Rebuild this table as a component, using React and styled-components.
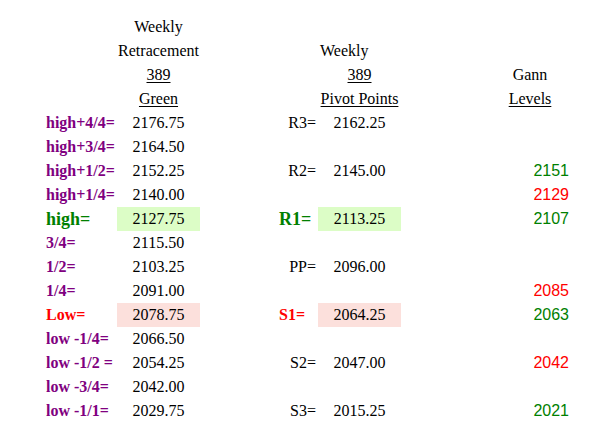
import React from "react";
import styled, { createGlobalStyle } from "styled-components";

const Global = createGlobalStyle`
  html, body { margin: 0; padding: 0; background: #ffffff; }
  body { font-family: "Liberation Serif", "Times New Roman", serif; font-size: 16px; color: #000; }
`;

const COLS = "71px 83px 79px 39px 83px 89px 80px";

const Table = styled.div`
  display: flex;
  flex-direction: column;
  padding: 15px 0 0 46px;
`;

const Row = styled.div`
  display: grid;
  grid-template-columns: ${COLS};
  height: 24px;
  align-items: stretch;
`;

const Cell = styled.div`
  display: flex;
  align-items: center;
  justify-content: ${(p) => p.$justify || "flex-start"};
  white-space: nowrap;
  line-height: 1;
  grid-column: ${(p) => p.$col};
  padding-left: ${(p) => p.$pl || 0}px;
  padding-right: ${(p) => p.$pr || 0}px;
`;

const HeadText = styled.span`
  text-decoration: ${(p) => (p.$u ? "underline" : "none")};
  text-underline-offset: 2px;
`;

const Label = styled.span`
  font-weight: bold;
  font-size: ${(p) => (p.$big ? 18 : 16)}px;
  color: ${(p) => p.$color || "#800080"};
`;

const PivotLabel = styled.span`
  font-weight: ${(p) => (p.$bold ? "bold" : "normal")};
  font-size: ${(p) => (p.$big ? 18 : 16)}px;
  color: ${(p) => p.$color || "#000"};
`;

const Value = styled(Cell)`
  justify-content: center;
  background: ${(p) => p.$bg || "transparent"};
`;

const Gann = styled(Cell)`
  justify-content: flex-end;
  padding-right: 1px;
  font-family: "Liberation Sans", Arial, sans-serif;
  color: ${(p) => p.$color};
`;

const PURPLE = "#800080";
const GREEN = "#008000";
const RED = "#ff0000";
const GREEN_BG = "#dcfdc6";
const PINK_BG = "#fce0dc";

const rows = [
  { l: "high+4/4=", v: "2176.75", p: "R3=", pv: "2162.25" },
  { l: "high+3/4=", v: "2164.50" },
  { l: "high+1/2=", v: "2152.25", p: "R2=", pv: "2145.00", g: "2151", gc: GREEN },
  { l: "high+1/4=", v: "2140.00", g: "2129", gc: RED },
  { l: "high=", lc: GREEN, big: true, v: "2127.75", bg: GREEN_BG, p: "R1=", pc: GREEN, pbold: true, pbig: true, pv: "2113.25", g: "2107", gc: GREEN },
  { l: "3/4=", v: "2115.50" },
  { l: "1/2=", v: "2103.25", p: "PP=", pv: "2096.00" },
  { l: "1/4=", v: "2091.00", g: "2085", gc: RED },
  { l: "Low=", lc: RED, v: "2078.75", bg: PINK_BG, p: "S1=", pc: RED, pbold: true, pv: "2064.25", g: "2063", gc: GREEN },
  { l: "low -1/4=", v: "2066.50" },
  { l: "low -1/2 =", v: "2054.25", p: "S2=", pv: "2047.00", g: "2042", gc: RED },
  { l: "low -3/4=", v: "2042.00" },
  { l: "low -1/1=", v: "2029.75", p: "S3=", pv: "2015.25", g: "2021", gc: GREEN },
];

export default function App() {
  return (
    <>
      <Global />
      <Table>
        <Row>
          <Cell $col={2} $justify="center"><HeadText>Weekly</HeadText></Cell>
        </Row>
        <Row>
          <Cell $col={2} $justify="center"><HeadText>Retracement</HeadText></Cell>
          <Cell $col={5} $pl={2}><HeadText>Weekly</HeadText></Cell>
        </Row>
        <Row>
          <Cell $col={2} $justify="center"><HeadText $u>389</HeadText></Cell>
          <Cell $col={5} $justify="center"><HeadText $u>389</HeadText></Cell>
          <Cell $col={7} $justify="center"><HeadText>Gann</HeadText></Cell>
        </Row>
        <Row>
          <Cell $col={2} $justify="center"><HeadText $u>Green</HeadText></Cell>
          <Cell $col={5} $justify="center"><HeadText $u>Pivot Points</HeadText></Cell>
          <Cell $col={7} $justify="center"><HeadText $u>Levels</HeadText></Cell>
        </Row>
        {rows.map((r, i) => (
          <Row key={i}>
            <Cell $col={1}>
              <Label $color={r.lc || PURPLE} $big={r.big}>{r.l}</Label>
            </Cell>
            <Value $col={2} $bg={r.bg}>{r.v}</Value>
            {r.p && (
              <Cell $col={4} $justify={r.pbold ? "flex-start" : "flex-end"} $pr={r.pbold ? 0 : 2}>
                <PivotLabel $bold={r.pbold} $big={r.pbig} $color={r.pc}>{r.p}</PivotLabel>
              </Cell>
            )}
            {r.pv && <Value $col={5} $bg={r.bg}>{r.pv}</Value>}
            {r.g && <Gann $col={7} $color={r.gc}>{r.g}</Gann>}
          </Row>
        ))}
      </Table>
    </>
  );
}
